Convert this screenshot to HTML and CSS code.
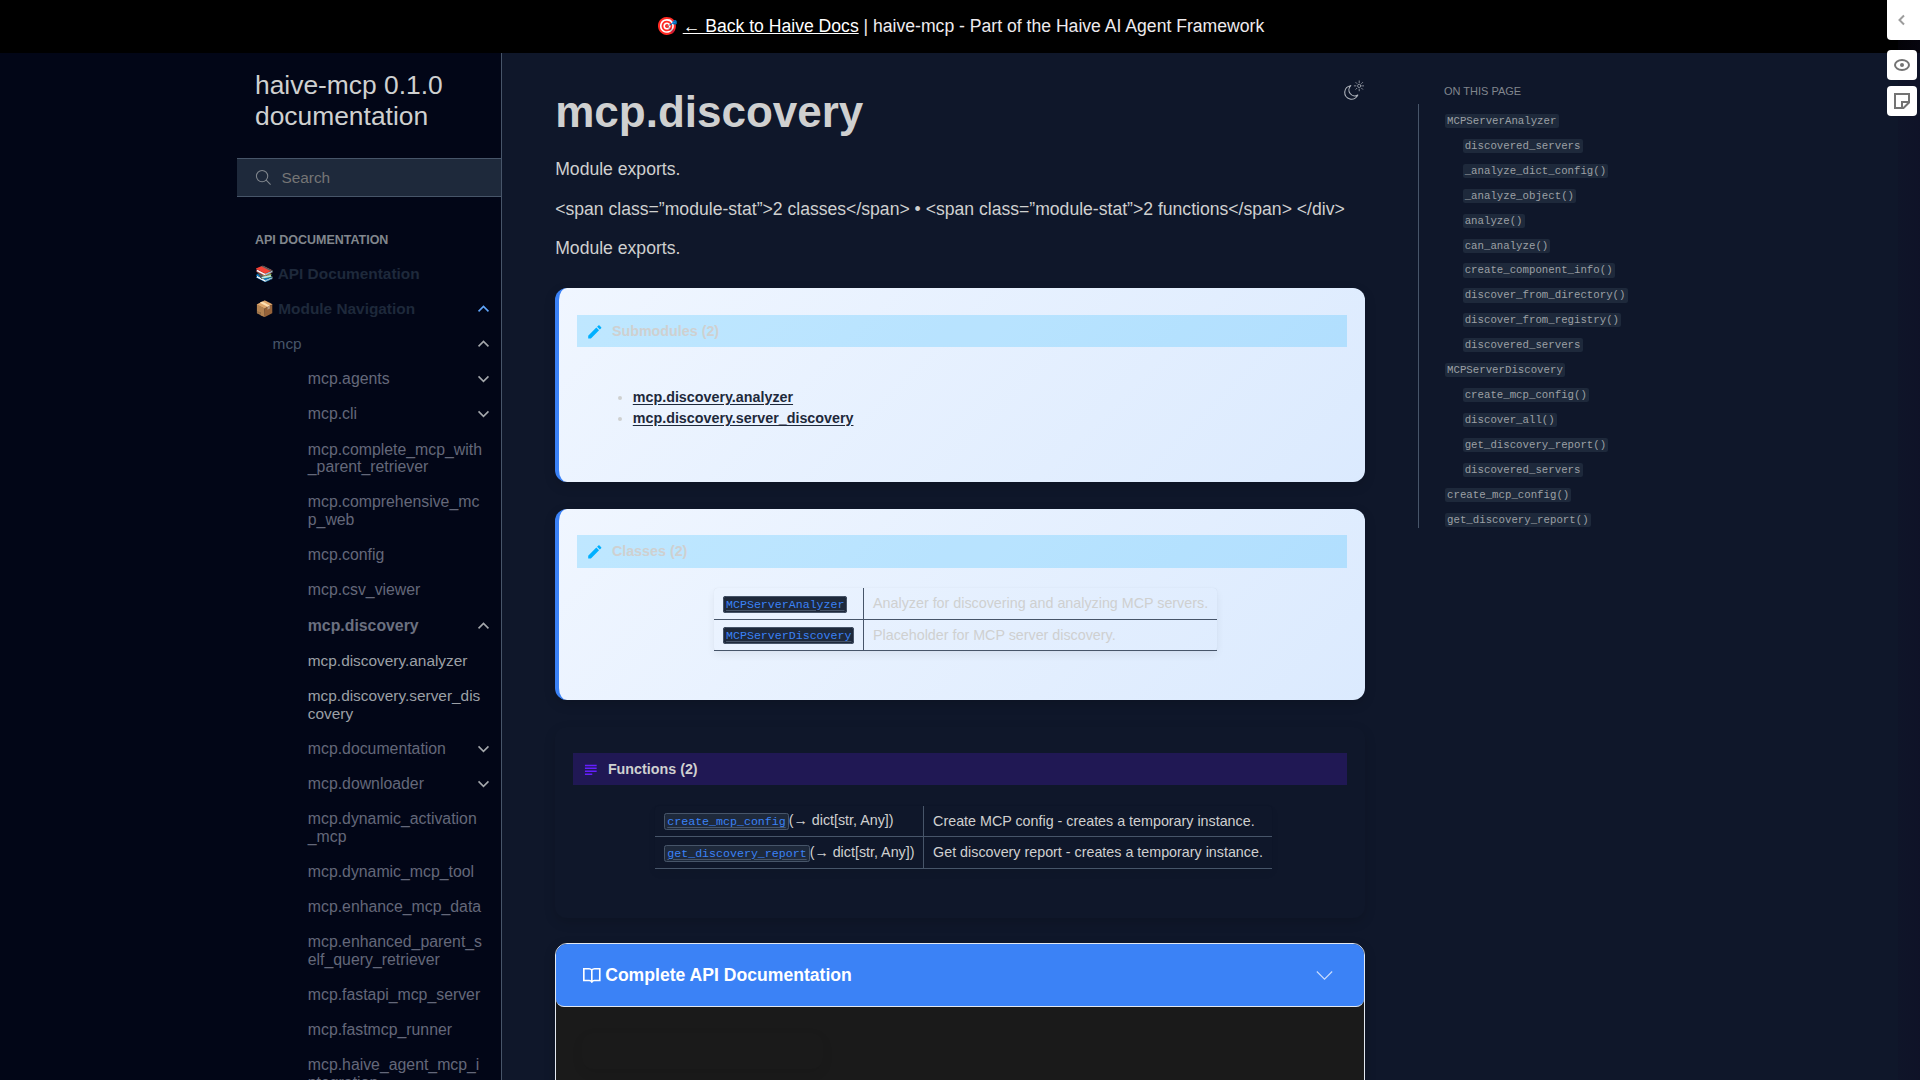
FILE: index.html
```html
<!DOCTYPE html>
<html lang="en">
<head>
<meta charset="utf-8">
<title>mcp.discovery - haive-mcp 0.1.0 documentation</title>
<link rel="stylesheet" href="styles.css">
</head>
<body>
<svg class="defs" width="0" height="0">
  <symbol id="down" viewBox="0 0 24 24"><path d="M5 9l7 7 7-7" fill="none" stroke="currentColor" stroke-width="2.2"/></symbol>
  <symbol id="up" viewBox="0 0 24 24"><path d="M5 16l7-7 7 7" fill="none" stroke="currentColor" stroke-width="2.2"/></symbol>
  <symbol id="pencil" viewBox="0 0 24 24"><path d="M20.71 7.04c.39-.39.39-1.04 0-1.41l-2.34-2.34c-.37-.39-1.02-.39-1.41 0l-1.84 1.83 3.75 3.75M3 17.25V21h3.75L17.81 9.93l-3.75-3.75L3 17.25z" fill="currentColor"/></symbol>
  <symbol id="abstract" viewBox="0 0 24 24"><path d="M4 5h16v2H4V5m0 4h16v2H4V9m0 4h16v2H4v-2m0 4h10v2H4v-2z" fill="currentColor"/></symbol>
</svg>
<header class="announcement"><p>🎯 <a href="#">← Back to Haive Docs</a> | haive-mcp - Part of the Haive AI Agent Framework</p></header>
<div class="page">
  <aside class="sidebar">
    <div class="sidebar-inner">
      <a class="brand">haive-mcp 0.1.0 documentation</a>
      <div class="search">
        <svg viewBox="0 0 24 24"><circle cx="10" cy="10" r="8" /><path d="M15.5 15.5l6.5 6.5"/></svg>
        <span>Search</span>
      </div>
      <nav class="tree">
        <p class="caption">API Documentation</p>
        <div class="row top"><span>📚 API Documentation</span></div>
        <div class="row top"><span>📦 Module Navigation</span><svg class="chev blue"><use href="#up"/></svg></div>
        <div class="row l1"><span>mcp</span><svg class="chev"><use href="#up"/></svg></div>
        <div class="row l2"><span>mcp.agents</span><svg class="chev"><use href="#down"/></svg></div>
        <div class="row l2"><span>mcp.cli</span><svg class="chev"><use href="#down"/></svg></div>
        <div class="row l2"><span>mcp.complete_mcp_with<br>_parent_retriever</span></div>
        <div class="row l2"><span>mcp.comprehensive_mc<br>p_web</span></div>
        <div class="row l2"><span>mcp.config</span></div>
        <div class="row l2"><span>mcp.csv_viewer</span></div>
        <div class="row l2 current"><span>mcp.discovery</span><svg class="chev"><use href="#up"/></svg></div>
        <div class="row l3"><span>mcp.discovery.analyzer</span></div>
        <div class="row l3"><span>mcp.discovery.server_dis<br>covery</span></div>
        <div class="row l2"><span>mcp.documentation</span><svg class="chev"><use href="#down"/></svg></div>
        <div class="row l2"><span>mcp.downloader</span><svg class="chev"><use href="#down"/></svg></div>
        <div class="row l2"><span>mcp.dynamic_activation<br>_mcp</span></div>
        <div class="row l2"><span>mcp.dynamic_mcp_tool</span></div>
        <div class="row l2"><span>mcp.enhance_mcp_data</span></div>
        <div class="row l2"><span>mcp.enhanced_parent_s<br>elf_query_retriever</span></div>
        <div class="row l2"><span>mcp.fastapi_mcp_server</span></div>
        <div class="row l2"><span>mcp.fastmcp_runner</span></div>
        <div class="row l2"><span>mcp.haive_agent_mcp_i<br>ntegration</span></div>
      </nav>
    </div>
  </aside>
  <main class="content">
    <svg class="theme" viewBox="0 0 24 24" fill="none" stroke="currentColor" stroke-linecap="round" stroke-linejoin="round">
      <path d="M9.6 6.2A7.4 7.4 0 1 0 17.2 16.4 6.4 6.4 0 0 1 9.6 6.2z" stroke-width="1.2"/>
      <g stroke-width=".8"><circle cx="18.8" cy="6.4" r="1.8"/><path d="M18.8 1v1.8M18.8 10v1.8M13.4 6.4h1.8M22.4 6.4h1.4M15.1 2.7l1.1 1.1M21.4 9l1.1 1.1M22.5 2.7l-1.1 1.1M16.2 9l-1.1 1.1"/></g>
    </svg>
    <h1>mcp.discovery</h1>
    <p>Module exports.</p>
    <p>&lt;span class=”module-stat”&gt;2 classes&lt;/span&gt; • &lt;span class=”module-stat”&gt;2 functions&lt;/span&gt; &lt;/div&gt;</p>
    <p>Module exports.</p>
    <section class="card light submodules">
      <h2 class="title"><svg><use href="#pencil"/></svg>Submodules (2)</h2>
      <ul>
        <li><a href="#">mcp.discovery.analyzer</a></li>
        <li><a href="#">mcp.discovery.server_discovery</a></li>
      </ul>
    </section>
    <section class="card light classes">
      <h2 class="title"><svg><use href="#pencil"/></svg>Classes (2)</h2>
      <table>
        <tr><td><a class="code" href="#">MCPServerAnalyzer</a></td><td>Analyzer for discovering and analyzing MCP servers.</td></tr>
        <tr><td><a class="code" href="#">MCPServerDiscovery</a></td><td>Placeholder for MCP server discovery.</td></tr>
      </table>
    </section>
    <section class="card functions">
      <h2 class="title"><svg><use href="#abstract"/></svg>Functions (2)</h2>
      <table>
        <tr><td><a class="code" href="#">create_mcp_config</a>(→ dict[str, Any])</td><td>Create MCP config - creates a temporary instance.</td></tr>
        <tr><td><a class="code" href="#">get_discovery_report</a>(→ dict[str, Any])</td><td>Get discovery report - creates a temporary instance.</td></tr>
      </table>
    </section>
    <section class="details">
      <div class="summary">
        <svg class="book" viewBox="0 0 16 16" fill="none" stroke="currentColor" stroke-width="1.5"><path d="M8 3.6C7.4 2.9 6.5 2.5 5.5 2.5H.75v10.7h4.9c1 0 1.8.4 2.35 1.1.55-.7 1.35-1.1 2.35-1.1h4.9V2.5H10.5C9.5 2.5 8.6 2.9 8 3.6zM8 3.6v11.6"/></svg>
        <span>Complete API Documentation</span>
        <svg class="open" viewBox="0 0 16 16" fill="none" stroke="currentColor" stroke-width="1.1"><path d="M.8 4.2L8 11.4l7.2-7.2"/></svg>
      </div>
      <div class="details-body"><div class="ghost"></div></div>
    </section>
  </main>
  <aside class="toc">
    <p class="toc-title">On this page</p>
    <div class="toc-tree">
      <div><code>MCPServerAnalyzer</code></div>
      <div class="sub"><code>discovered_servers</code></div>
      <div class="sub"><code>_analyze_dict_config()</code></div>
      <div class="sub"><code>_analyze_object()</code></div>
      <div class="sub"><code>analyze()</code></div>
      <div class="sub"><code>can_analyze()</code></div>
      <div class="sub"><code>create_component_info()</code></div>
      <div class="sub"><code>discover_from_directory()</code></div>
      <div class="sub"><code>discover_from_registry()</code></div>
      <div class="sub"><code>discovered_servers</code></div>
      <div><code>MCPServerDiscovery</code></div>
      <div class="sub"><code>create_mcp_config()</code></div>
      <div class="sub"><code>discover_all()</code></div>
      <div class="sub"><code>get_discovery_report()</code></div>
      <div class="sub"><code>discovered_servers</code></div>
      <div><code>create_mcp_config()</code></div>
      <div><code>get_discovery_report()</code></div>
    </div>
  </aside>
</div>
<div class="edge-shade"></div>
<div class="annotator">
  <div class="tab"><svg viewBox="0 0 16 16"><path d="M10 3.5L5.5 8l4.500 4.500" stroke="#9c9c9c"/></svg></div>
  <div class="btn"><svg viewBox="0 0 16 16"><ellipse cx="8" cy="8" rx="7" ry="5"/><circle cx="8" cy="8" r="2" fill="#737373" stroke="none"/></svg></div>
  <div class="btn"><svg viewBox="0 0 16 16"><path d="M1 1h14v8.500L9.500 15H1zM15 9H8v6"/></svg></div>
</div>
</body>
</html>
```
FILE: styles.css
```css
html { font-size: 17.6px; }
* { box-sizing: border-box; }
body {
  margin: 0;
  height: 1080px;
  overflow: hidden;
  background: #0f172a;
  color: #cfd0d0;
  font-family: "Liberation Sans", Arial, sans-serif;
  line-height: 1.5;
}
.defs { position: absolute; }
.announcement {
  height: 53px;
  display: flex;
  align-items: center;
  justify-content: center;
  background: #000;
  color: #eeebee;
}
.announcement p { margin: 0; }
.announcement a { color: #fff; text-underline-offset: 1px; }
.page { display: flex; height: 1027px; overflow: hidden; }

/* Left navigation */
.sidebar {
  width: 502.4px;
  flex: none;
  display: flex;
  justify-content: flex-end;
  background: #020617;
  border-right: 1px solid #475569;
}
.sidebar-inner { width: 264px; }
.brand {
  display: block;
  padding: 17px 17.6px 0;
  font-size: 1.5rem;
  line-height: 31px;
  height: 105px;
}
.search {
  display: flex;
  align-items: center;
  gap: 9px;
  height: 39px;
  padding-left: 18px;
  background: #1e293b;
  border: solid #475569;
  border-width: 1px 0;
  color: #757575;
  font-size: .875rem;
}
.search svg { width: 17px; height: 17px; fill: none; stroke: #81868d; stroke-width: 1.5; }
.tree { padding-top: 34px; }
.caption {
  margin: 0 0 6.9px 17.6px;
  color: #81868d;
  font-size: .71rem;
  font-weight: bold;
  line-height: 18px;
  text-transform: uppercase;
}
.row {
  display: flex;
  justify-content: space-between;
  align-items: flex-start;
  padding: 8.8px 9px 8.8px 70.4px;
  line-height: 17.6px;
  color: #64687a;
  font-size: .9rem;
}
.row.top { padding-left: 17.6px; color: #1e293b; font-size: .875rem; font-weight: bold; }
.row.l1 { padding-left: 35.2px; color: #475569; font-size: .875rem; }
.row.current { font-weight: bold; color: #6b7080; }
.row.l3 { font-size: .875rem; color: #9ca0a6; }
.chev { width: 17px; height: 17px; flex: none; color: #a5a8ac; }
.chev.blue { color: #60a5fa; }

/* Article */
.content { position: relative; width: 915.2px; flex: none; padding: 30px 52.8px 0; }
.content h1 { margin: 0; font-size: 2.5rem; line-height: 57px; }
.content p { margin: 13.2px 0; }
.content h1 + p { margin-top: 16px; }
.theme { position: absolute; top: 27px; right: 54px; width: 22px; height: 22px; color: #b0b5bd; }
.card {
  margin-bottom: 27px;
  padding: 26px 17.6px 0 17.6px;
  border-radius: 12px;
  font-size: .8125rem;
  box-shadow: 0 4px 12px rgba(0, 0, 0, .15);
}
.card.light {
  border-left: 4px solid #3b82f6;
  background: linear-gradient(135deg, #f0f6ff 0%, #dbeafe 100%);
}
.content p + .card { margin-top: 26px; }
.submodules { height: 194px; padding-top: 27px; }
.classes { height: 191px; }
.functions { height: 191px; margin-bottom: 25px; }
.title {
  display: flex;
  align-items: center;
  gap: 8.5px;
  height: 32px;
  margin: 0;
  padding: 2px 0 0 9px;
  font-size: .8125rem;
  background: rgba(0, 176, 255, .2);
}
.classes .title { height: 33px; padding-top: 1px; }
.title svg { width: 17.6px; height: 17.6px; color: #00b0ff; }
.functions .title { background: rgba(101, 31, 255, .2); }
.functions .title svg { color: #651fff; }
.card ul { margin: 40px 0 0; padding-left: 56px; line-height: 21.2px; }
.card li a { color: #1e293b; font-weight: bold; text-underline-offset: 2px; }
.card table {
  position: relative;
  left: 3.6px;
  margin: 21px auto 0;
  border-collapse: collapse;
  border-radius: 4px;
  line-height: 21.4px;
  box-shadow: 0 4px 9px rgba(0, 0, 0, .06), 0 0 1px rgba(0, 0, 0, .1);
}
.classes table { margin-top: 20.6px; }
.card td { height: 31.3px; padding: 1px 8.8px 0; border-bottom: 1px solid #475569; white-space: nowrap; }
.card td + td { border-left: 1px solid #475569; }
.code {
  padding: 1px 2px;
  border: 1px solid #475569;
  border-radius: 2.5px;
  background: #1e293b;
  color: #3b82f6;
  font-family: "Liberation Mono", monospace;
  font-size: 11.62px;
  text-decoration-color: #475569;
  text-underline-offset: 2px;
}
.details {
  height: 220px;
  border: 1px solid #e2e8f0;
  border-radius: 12px;
  background: #1a1a1a;
  overflow: hidden;
  box-shadow: 0 4px 12px rgba(0, 0, 0, .2);
}
.summary {
  display: flex;
  align-items: center;
  height: 63px;
  padding: 1px 31px 0 27px;
  border-bottom: 1px solid #e2e8f0;
  border-radius: 0 0 8px 8px;
  background: #3b82f6;
  color: #fff;
  font-weight: bold;
}
.book { width: 17.6px; height: 17.6px; margin-right: 4.4px; }
.open { width: 17px; height: 17px; margin-left: auto; color: #c9dcfc; }
.details-body { padding: 26px; }
.ghost { width: 241px; height: 36px; border-radius: 12px; box-shadow: 0 4px 12px rgba(0, 0, 0, .08); }

/* Page contents */
.toc { width: 264px; flex: none; }
.toc-title {
  margin: 0;
  padding: 30px 0 0 26.4px;
  height: 51px;
  color: #81868d;
  font-size: .625rem;
  line-height: 16px;
  text-transform: uppercase;
}
.toc-tree { height: 424px; padding: 5px 0 0 26.4px; border-left: 1px solid #475569; font-size: 0; }
.toc-tree div { height: 24.93px; line-height: 24.2px; }
.toc-tree .sub { padding-left: 17.6px; }
.toc code {
  padding: 1.1px 2.1px;
  border-radius: 2.2px;
  background: #1e293b;
  color: #9ca0a5;
  font-family: "Liberation Mono", monospace;
  font-size: 10.725px;
}

/* Annotation controls floating over the page edge */
.edge-shade {
  position: absolute;
  top: 0;
  right: 0;
  width: 22px;
  height: 100%;
  background: linear-gradient(90deg, rgba(15, 12, 36, .2), rgba(15, 12, 36, .4));
}
.annotator {
  position: absolute;
  top: 0;
  right: 0;
  width: 33px;
  display: flex;
  flex-direction: column;
  gap: 6px;
}
.annotator > div { display: flex; align-items: center; justify-content: center; background: #fff; }
.annotator svg { width: 16px; height: 16px; fill: none; stroke: #737373; stroke-width: 2; }
.annotator .tab { height: 40px; margin-bottom: 4px; padding-right: 3px; border-radius: 0 0 0 4px; }
.annotator .btn { width: 30px; height: 30px; border-radius: 4px; }
```
